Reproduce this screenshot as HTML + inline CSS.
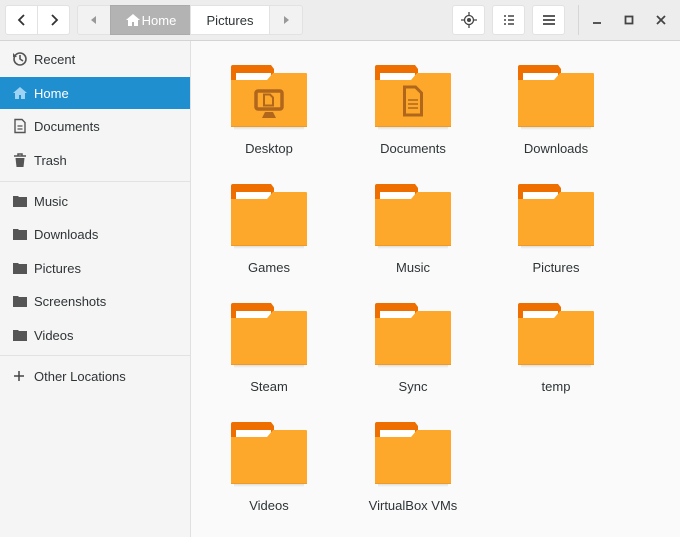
<!DOCTYPE html>
<html><head><style>
*{margin:0;padding:0;box-sizing:border-box}
body{width:680px;height:537px;overflow:hidden;font-family:"Liberation Sans",sans-serif;font-size:13px;color:#2e3436;background:#fafafa;position:relative}
.hb{position:absolute;left:0;top:0;width:680px;height:41px;background:#ededed;border-bottom:1px solid #d4d4d4}
.btn{position:absolute;top:5px;height:30px;background:#fff;border:1px solid #e2e2e2;border-radius:3px;display:flex;align-items:center;justify-content:center}
.side{position:absolute;left:0;top:41px;width:191px;height:496px;background:#f5f5f5;border-right:1px solid #e0e0e0}
.row{position:absolute;left:0;width:190px;height:32px;display:flex;align-items:center;padding-left:34px;color:#2e3436}
.row svg{position:absolute;left:12px}
.sep{position:absolute;left:0;width:190px;height:1px;background:#e2e2e2}
.f{position:absolute;width:130px;text-align:center}
.f .lbl{position:absolute;top:76px;left:0;width:130px;text-align:center;font-size:13px}
</style></head><body>
<div class="hb">
 <div class="btn" style="left:5px;width:33px;border-radius:3px 0 0 3px"><svg width="10" height="12"><path d="M7 1L2 6l5 5" stroke="#333" stroke-width="1.8" fill="none"/></svg></div>
 <div class="btn" style="left:37px;width:33px;border-radius:0 3px 3px 0"><svg width="10" height="12"><path d="M3 1l5 5-5 5" stroke="#333" stroke-width="1.8" fill="none"/></svg></div>
 <div class="btn" style="left:77px;width:34px;background:#f2f2f2;border-radius:3px 0 0 3px"><svg width="6" height="8"><path d="M5 0v8L0 4z" fill="#999"/></svg></div>
 <div class="btn" style="left:110px;width:81px;background:#b3b3b3;border-color:#aaa;border-radius:0;color:#fff;font-size:13px"><svg width="16" height="14" style="margin-right:1px"><path d="M8 1L1 7h2v6h4V9h2v4h4V7h2z" fill="#fff"/></svg>Home</div>
 <div class="btn" style="left:190px;width:80px;border-radius:0;font-size:13px">Pictures</div>
 <div class="btn" style="left:269px;width:34px;background:#f2f2f2;border-radius:0 3px 3px 0"><svg width="6" height="8"><path d="M1 0v8l5-4z" fill="#999"/></svg></div>
 <div class="btn" style="left:452px;width:33px"><svg width="16" height="16"><circle cx="8" cy="8" r="4.5" stroke="#444" stroke-width="1.3" fill="none"/><circle cx="8" cy="8" r="2" fill="#444"/><path d="M8 0v3M8 13v3M0 8h3M13 8h3" stroke="#444" stroke-width="1.3"/></svg></div>
 <div class="btn" style="left:492px;width:33px"><svg width="12" height="10"><path d="M1 1h2M5 1h6M1 5h2M5 5h6M1 9h2M5 9h6" stroke="#444" stroke-width="1.6"/></svg></div>
 <div class="btn" style="left:532px;width:33px"><svg width="12" height="10"><path d="M0 1h12M0 5h12M0 9h12" stroke="#444" stroke-width="1.8"/></svg></div>
 <div style="position:absolute;left:578px;top:5px;width:1px;height:30px;background:#d6d6d6"></div>
 <svg style="position:absolute;left:592px;top:18px" width="10" height="6"><path d="M1 5h8" stroke="#444" stroke-width="1.8"/></svg>
 <svg style="position:absolute;left:624px;top:15px" width="10" height="10"><rect x="1.5" y="1.5" width="7" height="7" stroke="#444" stroke-width="1.8" fill="none"/></svg>
 <svg style="position:absolute;left:656px;top:15px" width="10" height="10"><path d="M1 1l8 8M9 1l-8 8" stroke="#444" stroke-width="1.8"/></svg>
</div>
<div class="side">
 <div class="row" style="top:2px"><svg width="16" height="16"><circle cx="8" cy="8" r="6" stroke="#555" stroke-width="1.6" fill="none"/><path d="M8 4v4l3 2" stroke="#555" stroke-width="1.6" fill="none"/><path d="M1 2v4h4" fill="#555"/></svg>Recent</div>
 <div class="row" style="top:36px;background:#1f8fd0;color:#fff"><svg width="16" height="16"><path d="M8 2L1 8h2v6h4v-4h2v4h4V8h2z" fill="#9fd3f3"/></svg>Home</div>
 <div class="row" style="top:69px"><svg width="16" height="16"><path d="M3 1.5h7l3 3v10H3z" stroke="#555" stroke-width="1.4" fill="none"/><path d="M5.5 8h5M5.5 11h5" stroke="#555" stroke-width="1.2"/></svg>Documents</div>
 <div class="row" style="top:103px"><svg width="16" height="16"><path d="M2 4h12M6 4V2h4v2" stroke="#555" stroke-width="1.5" fill="none"/><path d="M3.5 6h9l-1 9h-7z" fill="#555"/></svg>Trash</div>
 <div class="sep" style="top:140px"></div>
 <div class="row" style="top:144px"><svg width="16" height="14"><path d="M1 2h5l1 1h8v10H1z" fill="#555"/></svg>Music</div>
 <div class="row" style="top:177px"><svg width="16" height="14"><path d="M1 2h5l1 1h8v10H1z" fill="#555"/></svg>Downloads</div>
 <div class="row" style="top:211px"><svg width="16" height="14"><path d="M1 2h5l1 1h8v10H1z" fill="#555"/></svg>Pictures</div>
 <div class="row" style="top:244px"><svg width="16" height="14"><path d="M1 2h5l1 1h8v10H1z" fill="#555"/></svg>Screenshots</div>
 <div class="row" style="top:278px"><svg width="16" height="14"><path d="M1 2h5l1 1h8v10H1z" fill="#555"/></svg>Videos</div>
 <div class="sep" style="top:314px"></div>
 <div class="row" style="top:319px"><svg width="14" height="14"><path d="M7 2v10M2 7h10" stroke="#444" stroke-width="1.5"/></svg>Other Locations</div>
</div>
<svg width="0" height="0" style="position:absolute"><defs>
<linearGradient id="sh" x1="0" y1="0" x2="0" y2="1"><stop offset="0" stop-color="#ddd"/><stop offset="1" stop-color="#fafafa"/></linearGradient>
<g id="fold"><path d="M0 2a2 2 0 0 1 2-2h38l3 4v12H0z" fill="#ee6f00"/><rect x="5" y="8" width="35" height="7" fill="#fff"/><path d="M0 15h36l6-7h33a1 1 0 0 1 1 1v52H0z" fill="#fda82a"/><rect x="0" y="61" width="76" height="1" fill="#ee9a25"/><rect x="3" y="62" width="70" height="3" fill="url(#sh)"/></g>
</defs></svg>
<div class="f" style="left:204px;top:65px"><svg width="76" height="66" style="position:absolute;left:27px;top:0"><use href="#fold"/><rect x="25" y="26" width="26" height="18" rx="2" stroke="#b0671c" stroke-width="3.5" fill="none"/><path d="M33 29.5h6l3 3v8h-9z" stroke="#b0671c" stroke-width="2" fill="none"/><path d="M31 53h14l-3-6h-8z" fill="#b0671c"/></svg><div class="lbl">Desktop</div></div>
<div class="f" style="left:348px;top:65px"><svg width="76" height="66" style="position:absolute;left:27px;top:0"><use href="#fold"/><path d="M29.5 22h11l6 6v22h-17z" stroke="#b0671c" stroke-width="3" fill="none"/><path d="M33 35h10M33 39h10M33 43h10" stroke="#b0671c" stroke-width="1.6"/></svg><div class="lbl">Documents</div></div>
<div class="f" style="left:491px;top:65px"><svg width="76" height="66" style="position:absolute;left:27px;top:0"><use href="#fold"/></svg><div class="lbl">Downloads</div></div>
<div class="f" style="left:204px;top:184px"><svg width="76" height="66" style="position:absolute;left:27px;top:0"><use href="#fold"/></svg><div class="lbl">Games</div></div>
<div class="f" style="left:348px;top:184px"><svg width="76" height="66" style="position:absolute;left:27px;top:0"><use href="#fold"/></svg><div class="lbl">Music</div></div>
<div class="f" style="left:491px;top:184px"><svg width="76" height="66" style="position:absolute;left:27px;top:0"><use href="#fold"/></svg><div class="lbl">Pictures</div></div>
<div class="f" style="left:204px;top:303px"><svg width="76" height="66" style="position:absolute;left:27px;top:0"><use href="#fold"/></svg><div class="lbl">Steam</div></div>
<div class="f" style="left:348px;top:303px"><svg width="76" height="66" style="position:absolute;left:27px;top:0"><use href="#fold"/></svg><div class="lbl">Sync</div></div>
<div class="f" style="left:491px;top:303px"><svg width="76" height="66" style="position:absolute;left:27px;top:0"><use href="#fold"/></svg><div class="lbl">temp</div></div>
<div class="f" style="left:204px;top:422px"><svg width="76" height="66" style="position:absolute;left:27px;top:0"><use href="#fold"/></svg><div class="lbl">Videos</div></div>
<div class="f" style="left:348px;top:422px"><svg width="76" height="66" style="position:absolute;left:27px;top:0"><use href="#fold"/></svg><div class="lbl">VirtualBox VMs</div></div>
</body></html>
